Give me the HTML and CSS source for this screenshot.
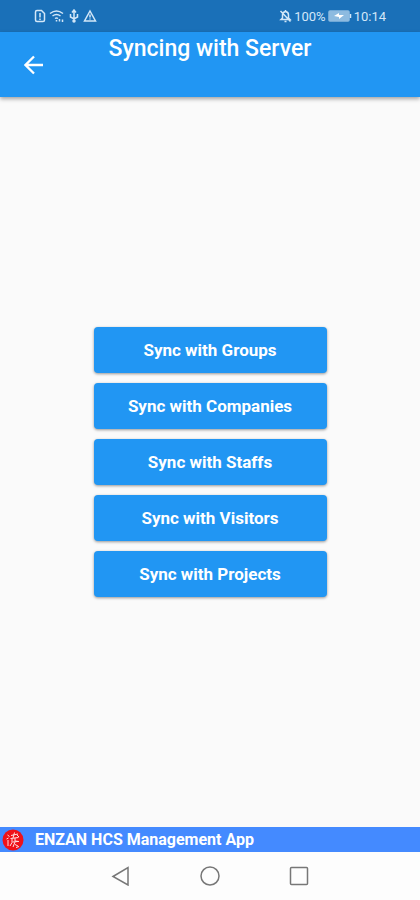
FILE: index.html
```html
<!DOCTYPE html>
<html lang="en">
<head>
<meta charset="utf-8">
<meta name="viewport" content="width=device-width, initial-scale=1">
<title>Syncing with Server</title>
<link rel="stylesheet" href="styles.css">
</head>
<body>
<div class="status">
  <div class="status-group">
    <svg width="12" height="14" viewBox="0 0 12 14"><path d="M3 1.500h4.500L10.500 4.500V11q0 1.500-1.500 1.500H3Q1.500 12.500 1.500 11V3Q1.500 1.500 3 1.500zM6 4v4.500M6 9.500v1.500"/></svg>
    <svg width="16" height="14" viewBox="0 0 16 14"><path d="M1 4.500q6.500-5 13 0M3.500 7q4-3 8 0M6 9.500q1.500-1 3 0M7.500 11v1.500M10.500 10v2.500M13.500 10.500v2.500"/></svg>
    <svg width="12" height="14" viewBox="0 0 12 14"><path d="M6 13V2M4 3.500l2-2.500 2 2.500M2.500 5v3L6 10l3.500-2V5"/><circle cx="6" cy="12" r="1"/></svg>
    <svg width="14" height="14" viewBox="0 0 14 14"><path d="M7 2l5.500 10h-11zM7 5.500v3M7 9.500v1"/></svg>
  </div>
  <div class="status-group status-right">
    <svg width="13" height="14" viewBox="0 0 13 14"><path d="M2 10.500h9L9.500 9V6q0-3-3-3.500Q3.500 3 3.500 6v3zM6.500 1v1M5.500 12.500h2M1.500 2l10 10.500"/></svg>
    <span>100%</span>
    <svg width="24" height="12" viewBox="0 0 24 12"><rect class="cell" x="1" y="1" width="20" height="10" rx="1"/><path d="M22.500 4v4"/><path class="bolt" d="M6 6l5-3v2h5l-5 4V7z"/></svg>
    <span>10:14</span>
  </div>
</div>
<header class="appbar">
  <button class="back" type="button" aria-label="Back">
    <svg width="20" height="20" viewBox="0 0 20 20"><path d="M19 10H2M10 1.500L1.500 10l8.500 8.500"/></svg>
  </button>
  <h1>Syncing with Server</h1>
</header>
<main>
  <button class="sync" type="button">Sync with Groups</button>
  <button class="sync" type="button">Sync with Companies</button>
  <button class="sync" type="button">Sync with Staffs</button>
  <button class="sync" type="button">Sync with Visitors</button>
  <button class="sync" type="button">Sync with Projects</button>
</main>
<footer class="brand">
  <svg width="22" height="22" viewBox="0 0 22 22"><circle cx="11" cy="11" r="10.500"/><path d="M5.500 6l2 1.500M4.500 10l2-1M6 11v6M9 6.500l7-1.500M12.500 3.500L11 9M8.500 9.500l8-1M15 6l2 2M10 9.500v4l-2 3.500M13 9v3l4 .5M10.500 13l5.500-.5M13 13l-2 5M13 15.500l3 1.500M14 18.500l3-1"/></svg>
  <span>ENZAN HCS Management App</span>
</footer>
<nav class="system">
  <button type="button" aria-label="Back"><svg width="20" height="20" viewBox="0 0 20 20"><path d="M2 10.500L17 1.500v17.500z"/></svg></button>
  <button type="button" aria-label="Home"><svg width="20" height="20" viewBox="0 0 20 20"><circle cx="10" cy="10" r="9"/></svg></button>
  <button type="button" aria-label="Recent apps"><svg width="20" height="20" viewBox="0 0 20 20"><rect x="1.500" y="1.500" width="17" height="17" rx="1"/></svg></button>
</nav>
</body>
</html>
```
FILE: styles.css
```css
* { box-sizing: border-box; }
body {
  margin: 0;
  min-height: 100vh;
  display: flex;
  flex-direction: column;
  background: #fafafa;
  font-family: Roboto, sans-serif;
}
button {
  border: 0;
  padding: 0;
  background: none;
  color: inherit;
  font-family: inherit;
  cursor: pointer;
}
svg {
  display: block;
  flex: none;
  fill: none;
  stroke: currentColor;
}
.status {
  height: 32px;
  padding: 0 34px;
  display: flex;
  align-items: center;
  justify-content: space-between;
  background: #1a70b8;
  color: #d3e7f8;
  font-size: 13px;
}
.status-group {
  display: flex;
  align-items: center;
  gap: 3px;
}
.status-group svg { stroke-width: 1.5; }
.status-right { gap: 2px; }
.status .cell { fill: #8dbbe0; stroke: #8dbbe0; }
.status .bolt { fill: #fff; stroke: none; }
.appbar {
  height: 65px;
  padding: 0 16px;
  display: grid;
  grid-template-columns: 36px 1fr 36px;
  background: #2196f3;
  color: #fff;
  box-shadow: 0 2px 4px rgba(0, 0, 0, .35);
}
.back {
  display: grid;
  place-items: center;
}
.back svg { stroke-width: 2.3; }
h1 {
  margin: 0;
  padding-top: 3px;
  font-size: 23px;
  line-height: 28px;
  font-weight: 500;
  text-align: center;
}
main {
  flex: 1;
  display: flex;
  flex-direction: column;
  align-items: center;
  justify-content: center;
  gap: 10px;
}
.sync {
  width: 55%;
  min-width: 233px;
  max-width: 320px;
  height: 46px;
  border-radius: 4px;
  background: #2196f3;
  color: #fff;
  font-size: 17px;
  font-weight: 700;
  box-shadow: 0 1px 3px rgba(0, 0, 0, .4);
}
.brand {
  height: 25px;
  padding: 0 2px;
  display: flex;
  align-items: center;
  gap: 11px;
  background: #448aff;
  color: #fff;
  font-size: 16px;
  font-weight: 700;
}
.brand circle { fill: #ef1119; stroke: none; }
.brand path { stroke: #ffe0e0; }
.system {
  height: 48px;
  display: flex;
  align-items: center;
  justify-content: center;
  gap: 69px;
  background: #fdfdfd;
  color: #777;
}
.system svg { stroke-width: 1.5; }
```
